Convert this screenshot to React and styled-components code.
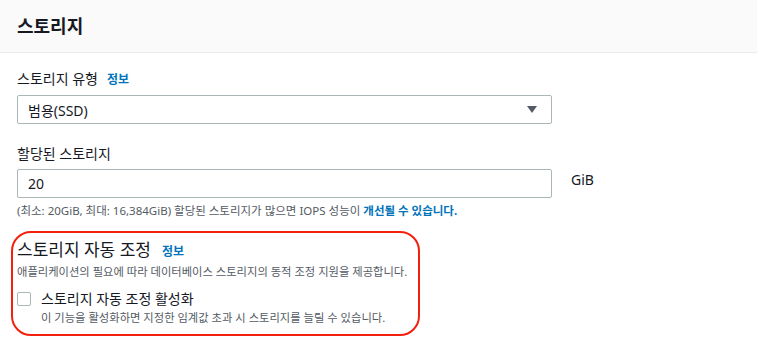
import React from "react";
import styled, { createGlobalStyle } from "styled-components";

const GlobalStyle = createGlobalStyle`
  html, body {
    margin: 0;
    padding: 0;
    background: #fff;
  }
  body {
    font-family: "Noto Sans", "Noto Sans CJK KR", sans-serif;
    color: #16191f;
  }
`;

const Panel = styled.section`
  width: 757px;
  height: 363px;
  overflow: hidden;
  background: #fff;
`;

const Header = styled.header`
  height: 52px;
  background: #fafafa;
  border-bottom: 1px solid #eaeded;
  display: flex;
  align-items: center;
  padding: 0 17px;
`;

const Title = styled.h2`
  margin: 0;
  font-size: 18px;
  font-weight: 700;
  color: #16191f;
  line-height: 1;
`;

const Body = styled.div`
  padding: 16px 17px 0;
  display: flex;
  flex-direction: column;
`;

const Field = styled.div`
  display: flex;
  flex-direction: column;
  margin-bottom: ${(p) => p.$gap || 0}px;
`;

const Label = styled.div`
  font-size: 14px;
  line-height: 20px;
  color: #16191f;
  display: flex;
  align-items: baseline;
  gap: 9px;
  margin-bottom: 5px;
`;

const Info = styled.a`
  font-size: 12px;
  font-weight: 700;
  color: #0073bb;
  text-decoration: none;
`;

const Row = styled.div`
  display: flex;
  align-items: flex-start;
  gap: 19px;
`;

const Box = styled.div`
  width: 535px;
  height: 29px;
  box-sizing: border-box;
  border: 1px solid #aab7b8;
  border-radius: 2px;
  display: flex;
  align-items: center;
  justify-content: space-between;
  padding: 0 14px 0 10px;
  font-size: 14px;
  color: #16191f;
`;

const Caret = styled.span`
  width: 0;
  height: 0;
  border-left: 5px solid transparent;
  border-right: 5px solid transparent;
  border-top: 7px solid #545b64;
`;

const Unit = styled.span`
  font-size: 14px;
  line-height: 20px;
  padding-top: 1px;
`;

const Hint = styled.div`
  font-size: 11.5px;
  line-height: 16px;
  color: #545b64;
  margin-top: 5px;
  white-space: nowrap;

  & > b {
    color: #0073bb;
    font-weight: 700;
  }
`;

const Highlight = styled.div`
  margin: 12px 0 0 -6px;
  width: 409px;
  height: 105px;
  box-sizing: border-box;
  border: 2px solid #f2200d;
  border-radius: 20px;
  padding: 6px 0 0 4px;
`;

const SubTitle = styled.div`
  font-size: 17px;
  line-height: 22px;
  color: #16191f;
  display: flex;
  align-items: baseline;
  gap: 11px;
`;

const Desc = styled.div`
  font-size: 11.3px;
  line-height: 16px;
  color: #545b64;
  margin-top: 1px;
  white-space: nowrap;
`;

const CheckRow = styled.label`
  display: flex;
  align-items: flex-start;
  gap: 10px;
  margin-top: 9px;
`;

const Check = styled.span`
  width: 14px;
  height: 14px;
  box-sizing: border-box;
  border: 1px solid #aab7b8;
  border-radius: 2px;
  margin-top: 3px;
  flex: none;
`;

const CheckText = styled.div`
  display: flex;
  flex-direction: column;
`;

const CheckLabel = styled.span`
  font-size: 14px;
  line-height: 20px;
  color: #16191f;
`;

export default function App() {
  return (
    <>
      <GlobalStyle />
      <Panel>
        <Header>
          <Title>스토리지</Title>
        </Header>
        <Body>
          <Field $gap={20}>
            <Label>
              스토리지 유형 <Info>정보</Info>
            </Label>
            <Box>
              범용(SSD)
              <Caret />
            </Box>
          </Field>
          <Field>
            <Label>할당된 스토리지</Label>
            <Row>
              <Box>20</Box>
              <Unit>GiB</Unit>
            </Row>
            <Hint>
              (최소: 20GiB, 최대: 16,384GiB) 할당된 스토리지가 많으면 IOPS 성능이 <b>개선될 수 있습니다.</b>
            </Hint>
          </Field>
          <Highlight>
            <SubTitle>
              스토리지 자동 조정 <Info>정보</Info>
            </SubTitle>
            <Desc>애플리케이션의 필요에 따라 데이터베이스 스토리지의 동적 조정 지원을 제공합니다.</Desc>
            <CheckRow>
              <Check />
              <CheckText>
                <CheckLabel>스토리지 자동 조정 활성화</CheckLabel>
                <Desc>이 기능을 활성화하면 지정한 임계값 초과 시 스토리지를 늘릴 수 있습니다.</Desc>
              </CheckText>
            </CheckRow>
          </Highlight>
        </Body>
      </Panel>
    </>
  );
}
